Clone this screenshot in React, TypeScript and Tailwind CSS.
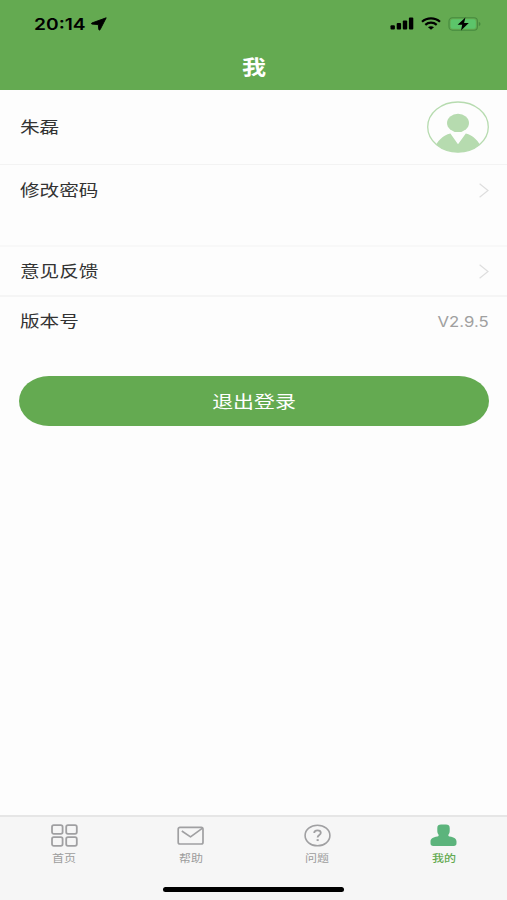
import React from "react";

const GridIcon = () => (
  <svg className="w-[27px] h-[23px]" viewBox="0 0 27 23" fill="none" stroke="#a0a0a2" strokeWidth="1.8">
    <rect x="1" y="1.2" width="10.6" height="8.6" rx="1.8" />
    <rect x="15.2" y="1.2" width="10.6" height="8.6" rx="1.8" />
    <rect x="1" y="13.2" width="10.6" height="8.6" rx="1.8" />
    <rect x="15.2" y="13.2" width="10.6" height="8.6" rx="1.8" />
  </svg>
);

const MailIcon = () => (
  <svg className="w-[27px] h-[23px]" viewBox="0 0 27 23" fill="none" stroke="#a0a0a2" strokeWidth="1.7" strokeLinejoin="round">
    <rect x="1.2" y="3.4" width="24.8" height="16.6" rx="1.8" />
    <path d="M4.8 7L13.5 12.9L25.2 4.4" />
  </svg>
);

const QuestionIcon = () => (
  <svg className="w-[27px] h-[23px]" viewBox="0 0 27 23" fill="none" stroke="#a0a0a2" strokeWidth="1.6">
    <ellipse cx="13.5" cy="11.5" rx="12.4" ry="10.3" />
    <path d="M10.2 9C10.2 7.2 11.6 6.3 13.5 6.3C15.4 6.3 16.8 7.2 16.8 8.8C16.8 11 13.6 10.9 13.6 13.6" strokeWidth="1.8" />
    <path d="M12.6 16.1H14.7" strokeWidth="1.9" />
  </svg>
);

const UserIcon = () => (
  <svg className="w-[27px] h-[23px]" viewBox="0 0 27 23" fill="#5cb47c">
    <path d="M7.3 4C7.3 1.6 8.8 .6 11 .6H16C18.2 .6 19.7 1.6 19.7 4V7C19.7 9 19 9.8 18.4 10.8C18.2 12 18.6 12.2 19.5 12.4C24.4 13 26.5 14.8 26.5 17.6V19.2C26.5 21 25.5 22 23.8 22H3.2C1.5 22 .5 21 .5 19.2V17.6C.5 14.8 2.6 13 7.5 12.4C8.4 12.2 8.8 12 8.6 10.8C8 9.8 7.3 9 7.3 7Z" />
  </svg>
);

const Chevron = () => (
  <svg className="w-[10px] h-[15px]" viewBox="0 0 10 15" fill="none" stroke="#dedede" strokeWidth="1.2">
    <path d="M.6 .8L9 7.5L.6 14.2" />
  </svg>
);

const Avatar = () => (
  <svg className="w-[62px] h-[52px]" viewBox="0 0 62 52">
    <defs>
      <clipPath id="avatar-clip">
        <ellipse cx="31" cy="26" rx="30.5" ry="25.2" />
      </clipPath>
    </defs>
    <g fill="#b6dbaf" clipPath="url(#avatar-clip)">
      <ellipse cx="31" cy="21.9" rx="11" ry="9.2" />
      <path d="M7 48C10 40 16 34 23.4 32.4L31 43.3L38.8 32.4C46 34 52 40 55 48V52H7Z" />
    </g>
    <ellipse cx="31" cy="26" rx="30.3" ry="25" fill="none" stroke="#b6dbaf" strokeWidth="1.3" />
  </svg>
);

const StatusBar = () => (
  <div className="h-[46px] flex items-center justify-between pl-[33.5px] pr-[26px] pt-[1px] text-black">
    <div className="flex items-center">
      <span className="w-[57px] font-['Inter',sans-serif] text-[16px] leading-none font-semibold whitespace-nowrap">
        <span className="inline-block origin-left scale-x-[1.2]">20:14</span>
      </span>
      <svg className="w-[16px] h-[14px]" viewBox="0 0 16 14" fill="currentColor" stroke="currentColor" strokeWidth=".9" strokeLinejoin="round">
        <path d="M15.2 .8L.8 6C.3 6.3 .4 7 .9 7.1L7.3 7.6L7.8 12.6C7.9 13.1 8.8 13.2 9.1 12.7Z" />
      </svg>
    </div>
    <div className="flex items-center">
      <svg className="w-[24px] h-[13px]" viewBox="0 0 24 13" fill="currentColor">
        <rect x=".5" y="8.2" width="4.4" height="4.3" rx="1" />
        <rect x="6.7" y="6" width="4.4" height="6.5" rx="1" />
        <rect x="12.8" y="3.4" width="4.4" height="9.1" rx="1" />
        <rect x="18.9" y=".5" width="4.4" height="12" rx="1" />
      </svg>
      <svg className="w-[20px] h-[13px] ml-[7px]" viewBox="0 0 20 13" fill="none" stroke="currentColor" strokeWidth="2.2">
        <path d="M1 4.7C6 .2 14 .2 19 4.7" />
        <path d="M4.3 7.8C7.6 5 12.4 5 15.7 7.8" />
        <path d="M7 10.2C8.7 8.8 11.3 8.8 13 10.2L10 12.7Z" fill="currentColor" stroke="none" />
      </svg>
      <svg className="w-[33px] h-[14px] ml-[7px]" viewBox="0 0 33 14">
        <rect x="1" y=".8" width="28.4" height="12.4" rx="3.4" fill="none" stroke="#468a3f" strokeWidth="1.1" />
        <rect x="2.6" y="2.2" width="25.2" height="9.6" rx="2.2" fill="#5cc56a" />
        <path d="M30.8 5C33 5.6 33 8.4 30.8 9Z" fill="#468a3f" />
        <path d="M17.4 .6L9.6 7.8H14.2L13 13.4L20.8 6.1H16.1Z" fill="#000" />
      </svg>
    </div>
  </div>
);

const Label = ({ children }: { children: React.ReactNode }) => (
  <span className="inline-block origin-left scale-x-[1.225] text-[16px] leading-6 text-[#333]">{children}</span>
);

const tabs = [
  { label: "首页", icon: GridIcon, active: false },
  { label: "帮助", icon: MailIcon, active: false },
  { label: "问题", icon: QuestionIcon, active: false },
  { label: "我的", icon: UserIcon, active: true },
];

const App = () => {
  return (
    <div className="w-[507px] h-[900px] flex flex-col overflow-hidden bg-[#fdfdfd] font-['Noto_Sans_CJK_SC',sans-serif]">
      <header className="h-[90px] shrink-0 bg-[#64aa51]">
        <StatusBar />
        <h1 className="h-[42px] flex items-center justify-center text-[20px] leading-none font-bold text-white">
          <span className="inline-block scale-x-[1.2]">我</span>
        </h1>
      </header>

      <main className="flex-1">
        <div className="h-[75px] flex items-center justify-between pl-[19.5px] pr-[18px] border-b border-[#f3f3f3]">
          <span className="pb-[2px]">
            <Label>朱磊</Label>
          </span>
          <Avatar />
        </div>
        <div className="h-[82px] flex items-start justify-between pt-[12px] pl-[19.5px] pr-[18px] border-b-2 border-[#f8f8f8]">
          <Label>修改密码</Label>
          <span className="pt-[6px]">
            <Chevron />
          </span>
        </div>
        <div className="h-[50px] flex items-center justify-between pl-[19.5px] pr-[18px] border-b-2 border-[#f5f5f5]">
          <span className="pb-[2px]">
            <Label>意见反馈</Label>
          </span>
          <Chevron />
        </div>
        <div className="h-[48px] flex items-center justify-between pl-[19.5px] pr-[18px]">
          <span className="pb-[2px]">
            <Label>版本号</Label>
          </span>
          <span className="inline-block origin-right scale-x-[1.17] pt-[1px] font-['Inter',sans-serif] text-[14.3px] text-[#a0a0a0]">V2.9.5</span>
        </div>

        <div className="pt-[31px] pl-[19px] pr-[18px]">
          <button className="w-full h-[50px] flex items-center justify-center pr-[1px] rounded-[30px/25px] bg-[#64aa51] text-[17px] text-white">
            <span className="inline-block scale-x-[1.23]">退出登录</span>
          </button>
        </div>
      </main>

      <nav className="h-[85px] shrink-0 flex flex-col justify-between border-t-2 border-[#e6e6e6] bg-[#f6f6f6]">
        <div className="flex pt-[7px] pl-[1px]">
          {tabs.map((tab) => {
            const Icon = tab.icon;
            return (
              <div key={tab.label} className="flex-1 flex flex-col items-center">
                <Icon />
                <span
                  className={`mt-[3px] inline-block scale-x-[1.2] text-[10px] leading-[15px] ${
                    tab.active ? "font-medium text-[#64aa51]" : "text-[#9c9c9c]"
                  }`}
                >
                  {tab.label}
                </span>
              </div>
            );
          })}
        </div>
        <div className="w-[181px] h-[5px] mx-auto mb-[8px] rounded-full bg-black" />
      </nav>
    </div>
  );
};

export default App;
